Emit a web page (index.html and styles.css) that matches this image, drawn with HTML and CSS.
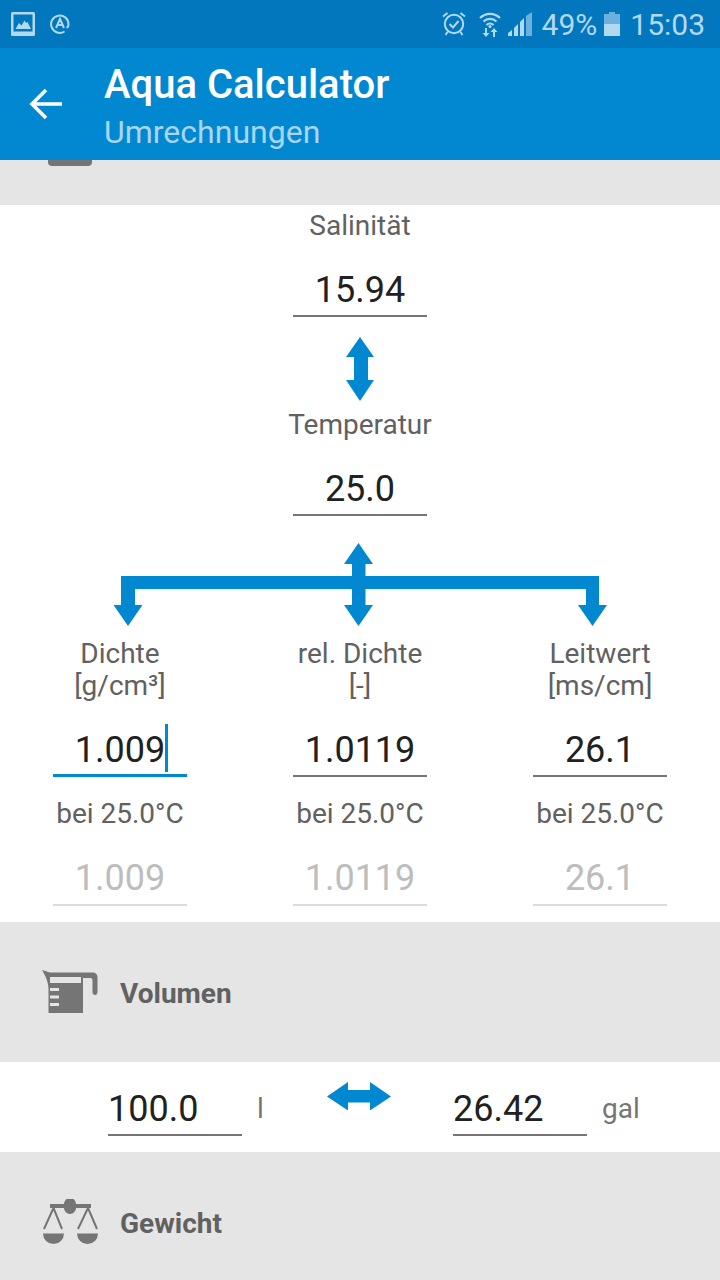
FILE: index.html
```html
<!DOCTYPE html>
<html lang="de">
<head>
    <meta charset="UTF-8">
    <meta name="viewport" content="width=device-width, initial-scale=1.0">
    <title>Aqua Calculator</title>
    <link rel="stylesheet" href="styles.css">
</head>
<body>
    <div class="status-bar">
        <div class="status-left">
            <svg class="icon-picture" viewBox="0 0 24 24" width="24" height="24">
                <path fill-rule="evenodd" d="M1.500 0h21a1.500 1.500 0 0 1 1.500 1.500v21a1.500 1.500 0 0 1-1.500 1.500h-21a1.500 1.500 0 0 1-1.500-1.500v-21a1.500 1.500 0 0 1 1.500-1.500zM2.500 2.500v17h19v-17z"/>
                <path d="M4.500 17l3.500-6 2.500 2.500 3-5 1.500 2.500 1.500-1 3.500 7z"/>
            </svg>
            <svg class="icon-auto" viewBox="0 0 20 20" width="20" height="20">
                <path d="M14.500 17.500a8.700 8.700 0 1 1 4-7.500c0 2-.5 3.500-2 3.500" fill="none" stroke-width="2"/>
                <path d="M6 14l4-9 4 9M7.500 11h5" fill="none" stroke-width="2"/>
            </svg>
        </div>
        <div class="status-right">
            <svg class="icon-alarm" viewBox="0 0 24 26" width="24" height="26">
                <circle cx="12" cy="13" r="9.200" fill="none" stroke-width="2"/>
                <path d="M7.500 13l3.500 3.500 5.500-6.500M1 5.500L5.500 2M23 5.500L18.500 2M5.500 21l-2 3M18.500 21l2 3" fill="none" stroke-width="2"/>
            </svg>
            <svg class="icon-wifi" viewBox="0 0 22 26" width="22" height="26">
                <path d="M1 7a14 14 0 0 1 20 0M4.500 10.500a9.500 9.500 0 0 1 13 0M7.500 14a5 5 0 0 1 7 0" fill="none" stroke-width="2.200"/>
                <circle cx="11" cy="15.500" r="1.500"/>
                <path d="M6 17v5H3.500l3.500 4 3.500-4H8v-5zM14 26v-5h-2.500l3.500-4 3.500 4H16v5z"/>
            </svg>
            <svg class="icon-signal" viewBox="0 0 25 24" width="25" height="24">
                <path d="M0 24v-3l4-3v6zM6 24v-8l4-4v12zM12 24V10l4-4v18z"/>
                <path class="dim" d="M18 24V4l6-4v24z"/>
            </svg>
            <span class="status-text">49%</span>
            <svg class="icon-battery" viewBox="0 0 16 24" width="16" height="24">
                <path class="dim" d="M5 0h6v2h5v10H0V2h5z"/>
                <rect y="12" width="16" height="12"/>
            </svg>
            <span class="status-text clock">15:03</span>
        </div>
    </div>

    <div class="app-bar">
        <svg class="back-arrow" viewBox="0 0 34 32" width="34" height="32">
            <path d="M33 16H3M17 2L3 16l14 14" fill="none" stroke="#fff" stroke-width="3.500"/>
        </svg>
        <div class="app-titles">
            <div class="app-title">Aqua Calculator</div>
            <div class="app-subtitle">Umrechnungen</div>
        </div>
    </div>

    <div class="band band-top"><div class="nub"></div></div>

    <div class="panel">
        <div class="label single">Salinität</div>
        <div class="field center">15.94</div>
        <svg class="arrow-updown" viewBox="345 337 28 64" width="28" height="64">
            <path d="M359 337l14 20h-6v23h6l-14 21-14-21h8v-23h-8z"/>
        </svg>
        <div class="label single temp">Temperatur</div>
        <div class="field center">25.0</div>
        <svg class="arrow-tree" viewBox="0 543 720 84" width="720" height="84">
            <path d="M358.500 543l14.500 21h-7.500v12H599v29h8l-14.500 21-14.500-21h8v-16H365.500v16h7.500l-14.500 21-14.500-21h8v-16H135v16h7.500l-14.500 21-14.500-21h7.500v-29h231v-12h-8z"/>
        </svg>
        <div class="columns">
            <div class="column">
                <div class="label">Dichte<br>[g/cm³]</div>
                <div class="field active">1.009<span class="caret"></span></div>
                <div class="note">bei 25.0°C</div>
                <div class="field muted">1.009</div>
            </div>
            <div class="column">
                <div class="label">rel. Dichte<br>[-]</div>
                <div class="field">1.0119</div>
                <div class="note">bei 25.0°C</div>
                <div class="field muted">1.0119</div>
            </div>
            <div class="column">
                <div class="label">Leitwert<br>[ms/cm]</div>
                <div class="field">26.1</div>
                <div class="note">bei 25.0°C</div>
                <div class="field muted">26.1</div>
            </div>
        </div>
    </div>

    <div class="band band-section volumen">
        <svg class="section-icon" viewBox="42 970 56 44" width="56" height="44">
            <path fill-rule="evenodd" d="M42 970l8 2.500h42c4 0 5.500 2 5.500 5v14c0 2.500-1 3.500-2.500 3.500s-2.500-1-2.500-3v-11c0-2-.5-3-2-3H83V1013H48.500V990c0-8-3-14-6.500-20zM50 977v6h31v-6zM50 988v3h9v-3zM50 995.500v3h9v-3zM50 1003v3h9v-3z"/>
        </svg>
        <span class="section-name">Volumen</span>
    </div>

    <div class="panel convert">
        <div class="field left">100.0</div>
        <span class="unit unit-l">l</span>
        <svg class="arrow-leftright" viewBox="327 1082 64 28" width="64" height="28">
            <path d="M327 1096.500l21-14.500v8h22v-8l21 14.500-21 14v-8h-22v8z"/>
        </svg>
        <div class="field left">26.42</div>
        <span class="unit">gal</span>
    </div>

    <div class="band band-section gewicht">
        <svg class="section-icon" viewBox="42 1198 58 46" width="58" height="46">
            <path d="M50 1203h14a6 6 0 0 1 12 0h15v4H76a6 6 0 0 1-12 0H50z"/>
            <path d="M53.500 1207l-9.500 21M53.500 1207l8.500 21M88 1207l-10 21M88 1207l9 21" fill="none" stroke-width="2"/>
            <path d="M43 1232.500h21a10.500 10.500 0 0 1-21 0zM77 1232.500h21a10.500 10.500 0 0 1-21 0z"/>
        </svg>
        <span class="section-name">Gewicht</span>
    </div>
</body>
</html>
```

FILE: styles.css
```css
html, body {
    margin: 0;
    height: 1280px;
    overflow: hidden;
}

body {
    font-family: 'Roboto', sans-serif;
    background: #fff;
    color: #616161;
}

.status-bar {
    height: 48px;
    background: #0277bd;
    display: flex;
    justify-content: space-between;
    align-items: center;
    padding: 0 15px 0 11px;
}

.status-left,
.status-right {
    display: flex;
    align-items: center;
}

.status-bar svg {
    fill: #b3d9f0;
    stroke: #b3d9f0;
    stroke-width: 0;
    display: block;
}

.status-bar .dim {
    fill: #6cb0dc;
}

.icon-auto {
    margin-left: 15px;
}

.icon-wifi {
    margin-left: 13px;
}

.icon-signal {
    margin-left: 7px;
}

.status-text {
    color: #b3d9f0;
    font-size: 30px;
    margin-left: 9px;
}

.icon-battery {
    margin-left: 7px;
}

.status-text.clock {
    margin-left: 10px;
}

.app-bar {
    height: 112px;
    background: #0288d1;
    display: flex;
    align-items: center;
}

.back-arrow {
    margin-left: 29px;
}

.app-titles {
    margin-left: 41px;
    margin-top: 10px;
}

.app-title {
    color: #fff;
    font-size: 40px;
    font-weight: 500;
    line-height: 46px;
}

.app-subtitle {
    color: #a6d6f2;
    font-size: 32px;
    line-height: 48px;
}

.band {
    background: #e5e5e5;
}

.band-top {
    height: 45px;
}

.nub {
    width: 44px;
    height: 6px;
    margin-left: 48px;
    background: #757575;
    border-radius: 0 0 4px 4px;
}

.panel {
    background: #fff;
}

.panel > svg {
    display: block;
    fill: #0288d1;
}

.label {
    font-size: 28px;
    line-height: 32px;
    text-align: center;
    color: #616161;
}

.label.single {
    padding-top: 5px;
}

.label.temp {
    padding-top: 8px;
}

.field {
    width: 134px;
    box-sizing: border-box;
    height: 57px;
    line-height: 60px;
    font-size: 36px;
    text-align: center;
    color: #212121;
    border-bottom: 2px solid #757575;
}

.field.center {
    margin: 18px auto 0;
}

.arrow-updown {
    margin: 20px auto 0;
}

.arrow-tree {
    margin-top: 27px;
}

.columns {
    display: grid;
    grid-template-columns: repeat(3, 240px);
    margin-top: 11px;
    height: 284px;
}

.column {
    display: flex;
    flex-direction: column;
    align-items: center;
}

.column .field {
    margin-top: 18px;
}

.field.active {
    border-bottom-color: #0288d1;
    border-bottom-width: 3px;
}

.caret {
    display: inline-block;
    width: 3px;
    height: 48px;
    margin-right: -3px;
    background: #0288d1;
    vertical-align: -10px;
}

.note {
    font-size: 28px;
    line-height: 32px;
    margin-top: 21px;
}

.column .field.muted {
    margin-top: 18px;
    height: 58px;
    color: #bdbdbd;
    border-bottom-color: #dcdcdc;
}

.band-section {
    display: flex;
    align-items: center;
    padding-left: 42px;
    height: 140px;
}

.section-icon {
    fill: #757575;
    stroke: #757575;
    stroke-width: 0;
    display: block;
}

.section-name {
    font-size: 28px;
    font-weight: 700;
    color: #616161;
    margin-left: 22px;
    margin-top: 2px;
}

.gewicht .section-name {
    margin-left: 20px;
}

.convert {
    height: 90px;
    display: flex;
    padding-left: 108px;
}

.field.left {
    text-align: left;
    height: 74px;
    line-height: 94px;
}

.unit {
    font-size: 28px;
    line-height: 94px;
    margin-left: 15px;
    color: #757575;
}

.unit-l {
    width: 10px;
}

.panel > .arrow-leftright {
    margin: 20px 62px 0 60px;
}
```
